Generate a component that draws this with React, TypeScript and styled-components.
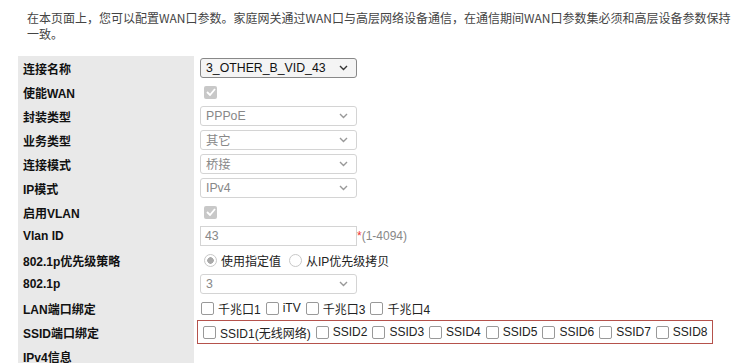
import React from 'react';
import styled, { createGlobalStyle } from 'styled-components';

const GlobalStyle = createGlobalStyle`
  body {
    margin: 0;
    background: #fff;
    font-family: "Liberation Sans", Arial, "Noto Sans CJK SC", sans-serif;
    font-size: 12px;
    color: #333;
  }
`;

const Chevron = ({ dim }: { dim?: boolean }) => (
  <svg width="9" height="6" viewBox="0 0 9 6">
    <path d="M1 1 L4.5 4.5 L8 1" fill="none" stroke={dim ? '#999' : '#333'} strokeWidth="1.4" />
  </svg>
);

const Tick = () => (
  <svg width="10" height="8" viewBox="0 0 10 8">
    <path d="M1 4 L4 7 L9 1" fill="none" stroke="#fff" strokeWidth="1.8" />
  </svg>
);

export default function App() {
  return (
    <Page>
      <GlobalStyle />
      <Intro>
        在本页面上，您可以配置WAN口参数。家庭网关通过WAN口与高层网络设备通信，在通信期间WAN口参数集必须和高层设备参数保持一致。
      </Intro>
      <Table>
        <Row>
          <Label>连接名称</Label>
          <Value>
            <Select>
              <span>3_OTHER_B_VID_43</span>
              <Chevron />
            </Select>
          </Value>
        </Row>
        <Row>
          <Label>使能WAN</Label>
          <Value>
            <CheckDisabled><Tick /></CheckDisabled>
          </Value>
        </Row>
        <Row>
          <Label>封装类型</Label>
          <Value>
            <Select disabled>
              <span>PPPoE</span>
              <Chevron dim />
            </Select>
          </Value>
        </Row>
        <Row>
          <Label>业务类型</Label>
          <Value>
            <Select disabled>
              <span>其它</span>
              <Chevron dim />
            </Select>
          </Value>
        </Row>
        <Row>
          <Label>连接模式</Label>
          <Value>
            <Select disabled>
              <span>桥接</span>
              <Chevron dim />
            </Select>
          </Value>
        </Row>
        <Row>
          <Label>IP模式</Label>
          <Value>
            <Select disabled>
              <span>IPv4</span>
              <Chevron dim />
            </Select>
          </Value>
        </Row>
        <Row>
          <Label>启用VLAN</Label>
          <Value>
            <CheckDisabled><Tick /></CheckDisabled>
          </Value>
        </Row>
        <Row>
          <Label>Vlan ID</Label>
          <Value>
            <TextBox>43</TextBox>
            <Hint><Star>*</Star>(1-4094)</Hint>
          </Value>
        </Row>
        <Row>
          <Label>802.1p优先级策略</Label>
          <Value>
            <Option><Radio checked />使用指定值</Option>
            <Option><Radio />从IP优先级拷贝</Option>
          </Value>
        </Row>
        <Row>
          <Label>802.1p</Label>
          <Value>
            <Select disabled>
              <span>3</span>
              <Chevron dim />
            </Select>
          </Value>
        </Row>
        <Row>
          <Label>LAN端口绑定</Label>
          <Value>
            {['千兆口1', 'iTV', '千兆口3', '千兆口4'].map((t) => (
              <Option key={t}><Box />{t}</Option>
            ))}
          </Value>
        </Row>
        <Row>
          <Label>SSID端口绑定</Label>
          <Value>
            <Framed>
              {['SSID1(无线网络)', 'SSID2', 'SSID3', 'SSID4', 'SSID5', 'SSID6', 'SSID7', 'SSID8'].map((t) => (
                <Option key={t}><Box />{t}</Option>
              ))}
            </Framed>
          </Value>
        </Row>
        <Row>
          <Label>IPv4信息</Label>
          <Value />
        </Row>
      </Table>
    </Page>
  );
}

const Page = styled.div`
  padding: 10px 0 0 0;
`;

const Intro = styled.div`
  margin-left: 27px;
  width: 712px;
  font-size: 12px;
  line-height: 16px;
  color: #444;
  font-family: "Noto Sans CJK SC", sans-serif;
`;

const Table = styled.div`
  margin: 14px 0 0 18px;
  width: 696px;
  display: flex;
  flex-direction: column;
`;

const Row = styled.div`
  display: grid;
  grid-template-columns: 176px 1fr;
  height: 24px;
`;

const Label = styled.div`
  background: #e9e9e9;
  padding-left: 5px;
  display: flex;
  align-items: center;
  font-weight: bold;
  font-size: 12px;
  color: #111;
  font-family: "Liberation Sans", Arial, "Noto Sans CJK SC", sans-serif;
`;

const Value = styled.div`
  display: flex;
  align-items: center;
  padding-left: 6px;
  gap: 4px;
`;

const Select = styled.div<{ disabled?: boolean }>`
  box-sizing: border-box;
  width: 157px;
  height: 20px;
  border: 1px solid ${({ disabled }) => (disabled ? '#d4d4d4' : '#888')};
  border-radius: 3px;
  background: ${({ disabled }) => (disabled ? '#fff' : '#f4f4f4')};
  color: ${({ disabled }) => (disabled ? '#888' : '#111')};
  display: flex;
  align-items: center;
  justify-content: space-between;
  padding: 0 8px 0 5px;
  font-size: 12.3px;
`;

const CheckDisabled = styled.div`
  width: 13px;
  height: 13px;
  margin-left: 4px;
  border-radius: 2px;
  background: #c8c8c8;
  display: flex;
  align-items: center;
  justify-content: center;
`;

const TextBox = styled.div`
  box-sizing: border-box;
  width: 157px;
  height: 20px;
  border: 1px solid #d4d4d4;
  padding-left: 4px;
  display: flex;
  align-items: center;
  color: #888;
  font-size: 12.3px;
  margin-right: -4px;
`;

const Hint = styled.span`
  color: #888;
  font-size: 12px;
`;

const Star = styled.span`
  color: #e33;
`;

const Option = styled.label`
  display: inline-flex;
  align-items: center;
  gap: 4px;
  font-size: 12px;
  color: #222;
  white-space: nowrap;
`;

const Radio = styled.span<{ checked?: boolean }>`
  box-sizing: border-box;
  width: 13px;
  height: 13px;
  border-radius: 50%;
  border: 1px solid #c8c8c8;
  margin-left: 4px;
  background: ${({ checked }) =>
    checked ? 'radial-gradient(circle, #aaa 0 3px, #fff 3.5px)' : '#fff'};
`;

const Box = styled.span`
  box-sizing: border-box;
  width: 13px;
  height: 13px;
  border: 1px solid #999;
  border-radius: 2px;
  margin-left: 1px;
  background: #fff;
`;

const Framed = styled.div`
  box-sizing: border-box;
  margin-left: -3px;
  width: 516px;
  height: 24px;
  border: 1px solid #b5524c;
  display: flex;
  align-items: center;
  gap: 4px;
  padding-left: 4px;
`;
